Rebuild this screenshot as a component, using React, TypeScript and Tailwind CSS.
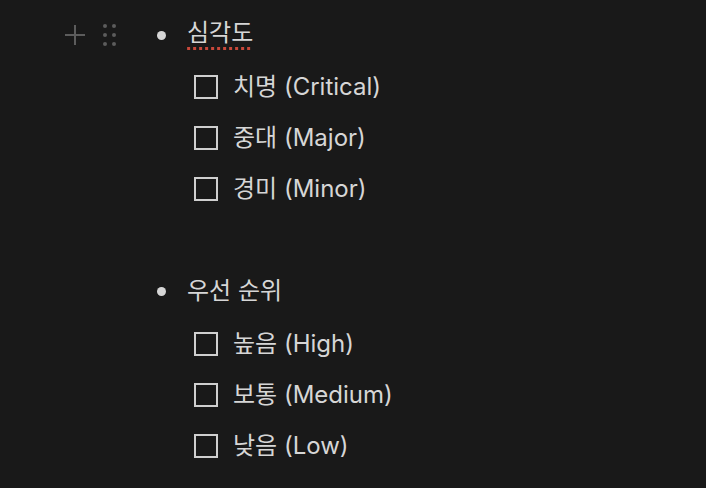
import React from "react";

const font = { fontFamily: 'Inter, "Noto Sans CJK KR", sans-serif' };

function Todo({ label }: { label: string }) {
  return (
    <div className="flex h-[51px] items-center pl-[194px]">
      <div className="h-[24px] w-[24px] shrink-0 border-2 border-[#cfcfcf]" />
      <span className="ml-[15px] text-[24px] leading-none text-[#d6d6d6]">{label}</span>
    </div>
  );
}

function Bullet({ children, controls }: { children: React.ReactNode; controls?: boolean }) {
  return (
    <div className="flex h-[52px] items-center">
      <div className="flex w-[157px] items-center">
        {controls && (
          <>
            <svg className="ml-[64px]" width="22" height="22" viewBox="0 0 22 22">
              <path d="M11 1v20M1 11h20" stroke="#5c5c5c" strokeWidth="2" />
            </svg>
            <svg className="ml-[17px]" width="14" height="22" viewBox="0 0 14 22">
              {[2, 11, 20].map((y) =>
                [2, 11].map((x) => <circle key={`${x}-${y}`} cx={x} cy={y} r="2" fill="#5c5c5c" />)
              )}
            </svg>
          </>
        )}
      </div>
      <div className="h-[9px] w-[9px] rounded-full bg-[#d6d6d6]" />
      <span className="ml-[21px] text-[24px] leading-none text-[#d6d6d6]">{children}</span>
    </div>
  );
}

export default function App() {
  return (
    <div className="h-[488px] w-[706px] overflow-hidden bg-[#191919] pt-[9px]" style={font}>
      <Bullet controls>
        <span className="inline-block bg-[linear-gradient(to_right,#c8483a_3px,transparent_3px)] bg-[length:6px_3px] bg-bottom bg-repeat-x pb-[5px]">
          심각도
        </span>
      </Bullet>
      <Todo label="치명 (Critical)" />
      <Todo label="중대 (Major)" />
      <Todo label="경미 (Minor)" />
      <div className="h-[51px]" />
      <Bullet>우선 순위</Bullet>
      <div className="h-px" />
      <Todo label="높음 (High)" />
      <Todo label="보통 (Medium)" />
      <Todo label="낮음 (Low)" />
    </div>
  );
}
